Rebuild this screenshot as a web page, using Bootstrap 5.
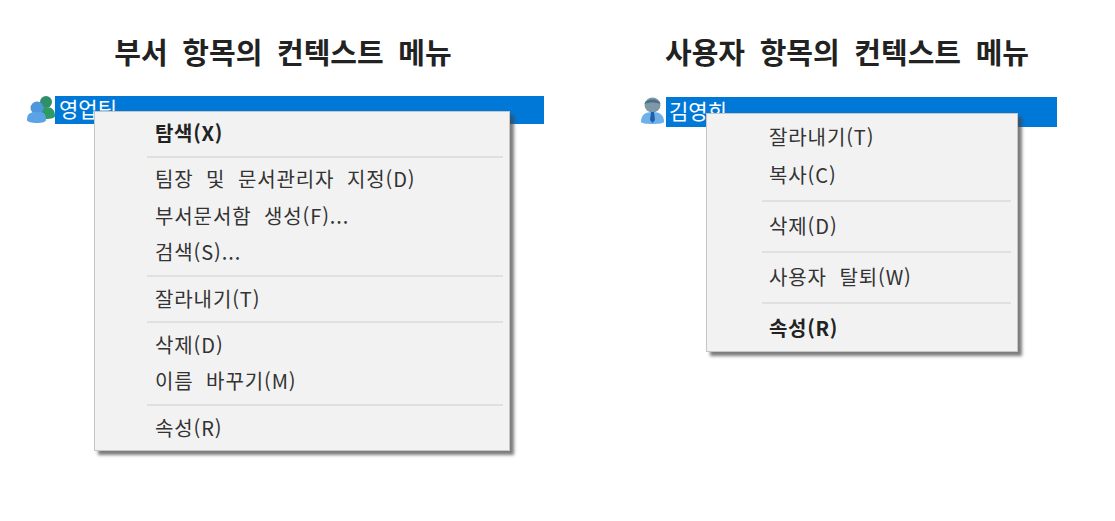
<!DOCTYPE html>
<html lang="ko">
<head>
<meta charset="utf-8">
<title>컨텍스트 메뉴</title>
<link href="https://cdn.jsdelivr.net/npm/bootstrap@5.3.0/dist/css/bootstrap.min.css" rel="stylesheet">
<style>
html,body{height:100%;background:#fff;overflow:hidden}
body{font-family:"Noto Sans CJK KR","Liberation Sans",sans-serif;color:#222}
.stage{padding:0 0 0 27px;gap:96px}
.pane-a{width:517px}
.pane-b{width:417px;padding-top:1px}
.pane-title{font-size:29px;font-weight:700;color:#222;word-spacing:6.500px;line-height:36px;height:96px;padding:33px 5px 0 0;margin:0;text-align:center;white-space:nowrap}
.pane-b .pane-title{padding:32px 3px 0 0}
.tree-row{position:relative}
.tree-ico{width:28px;height:28px;flex:none}
.pane-b .tree-ico{width:26px}
.tree-sel{flex:1;background:#0078d7;color:#fff;font-size:21px;line-height:24px;padding-left:4px;height:28px;overflow:hidden}
.pane-b .tree-sel{height:30px;padding:1px 0 0 3px}
.ctx{position:absolute;display:block;background:#f2f2f2;border:1px solid #c6c6c6;border-radius:0;padding:0;margin:0;min-width:0;box-shadow:4px 4px 3px rgba(70,70,70,.7);color:#333}
.pane-a .ctx{left:67px;top:15px;width:416px;height:340px;padding-top:3px}
.pane-b .ctx{left:66px;top:16px;width:312px;height:239px;padding-top:4px}
.ctx .dropdown-item{padding:0 0 0 60px;color:#333;font-size:20px;letter-spacing:.9px;word-spacing:6px;line-height:36.5px;height:36.5px;white-space:nowrap;background:none}
.pane-b .ctx .dropdown-item{padding-left:62px;height:38px;line-height:38px}
.ctx .fw-bold{color:#222;letter-spacing:.7px}
.ctx .dropdown-divider{margin:4px 6px 3.800px 52px;border-top:2px solid #e0e0e0;opacity:1}
.pane-b .ctx .dropdown-divider{margin:5.500px 6px 5.500px 55px}
</style>
</head>
<body>
<div class="stage d-flex">
  <section class="pane-a">
    <h2 class="pane-title">부서 항목의 컨텍스트 메뉴</h2>
    <div class="tree-row d-flex">
      <svg class="tree-ico" viewBox="0 0 28 28" aria-hidden="true">
        <ellipse cx="19" cy="6" rx="6" ry="6" fill="#2f8f6a"/>
        <path d="M10 20c0-6 3-9 9-9s9 3 9 9c0 2-4 3-9 3s-9-1-9-3z" fill="#2f9a63"/>
        <ellipse cx="10" cy="12" rx="6.500" ry="6.500" fill="#4f97dc"/>
        <path d="M0 24c0-6 3-8 9-8h3c5 0 7 2 7 8 0 2-4 3-9 3s-10-1-10-3z" fill="#5aa3e6"/>
      </svg>
      <div class="tree-sel">영업팀</div>
      <ul class="dropdown-menu show ctx list-unstyled">
        <li><span class="dropdown-item fw-bold">탐색(X)</span></li>
        <li><hr class="dropdown-divider"></li>
        <li><span class="dropdown-item">팀장 및 문서관리자 지정(D)</span></li>
        <li><span class="dropdown-item">부서문서함 생성(F)...</span></li>
        <li><span class="dropdown-item">검색(S)...</span></li>
        <li><hr class="dropdown-divider"></li>
        <li><span class="dropdown-item">잘라내기(T)</span></li>
        <li><hr class="dropdown-divider"></li>
        <li><span class="dropdown-item">삭제(D)</span></li>
        <li><span class="dropdown-item">이름 바꾸기(M)</span></li>
        <li><hr class="dropdown-divider"></li>
        <li><span class="dropdown-item">속성(R)</span></li>
      </ul>
    </div>
  </section>
  <section class="pane-b">
    <h2 class="pane-title">사용자 항목의 컨텍스트 메뉴</h2>
    <div class="tree-row d-flex">
      <svg class="tree-ico" viewBox="0 0 26 28" aria-hidden="true">
        <ellipse cx="12.500" cy="8" rx="8" ry="7.500" fill="#7d98a8"/>
        <path d="M4.500 7c1-6 15-6 16 0-5-2-11-2-16 0z" fill="#4d6f86"/>
        <path d="M1 25c0-7 4-10 11.500-10S24 18 24 25c0 1-5 2-11.500 2S1 26 1 25z" fill="#6db0ea"/>
        <path d="M11 15h3l1 8-2.500 3-2.500-3z" fill="#1f5fa8"/>
      </svg>
      <div class="tree-sel">김영희</div>
      <ul class="dropdown-menu show ctx list-unstyled">
        <li><span class="dropdown-item">잘라내기(T)</span></li>
        <li><span class="dropdown-item">복사(C)</span></li>
        <li><hr class="dropdown-divider"></li>
        <li><span class="dropdown-item">삭제(D)</span></li>
        <li><hr class="dropdown-divider"></li>
        <li><span class="dropdown-item">사용자 탈퇴(W)</span></li>
        <li><hr class="dropdown-divider"></li>
        <li><span class="dropdown-item fw-bold">속성(R)</span></li>
      </ul>
    </div>
  </section>
</div>
<script src="https://cdn.jsdelivr.net/npm/bootstrap@5.3.0/dist/js/bootstrap.bundle.min.js"></script>
</body>
</html>
